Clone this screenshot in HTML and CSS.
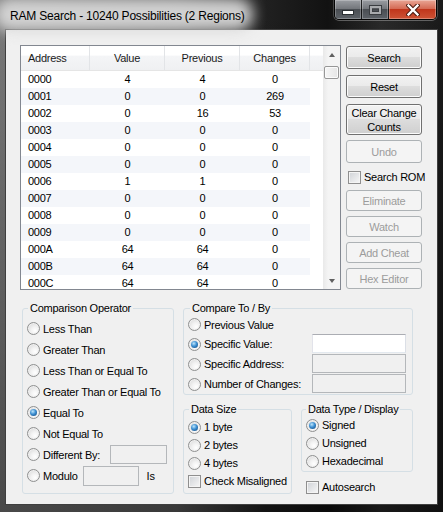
FILE: index.html
```html
<!DOCTYPE html>
<html>
<head>
<meta charset="utf-8">
<title>RAM Search</title>
<link rel="stylesheet" href="styles.css">
</head>
<body>
<div class="window">
  <div class="titlebar">
    <div class="title"><span class="glow"></span><span class="title-text">RAM Search - 10240 Possibilities (2 Regions)</span></div>
    <div class="caption">
      <div class="cap min"><svg width="12" height="5" viewBox="0 0 12 5"><rect x="0.5" y="0.5" width="11" height="4" fill="#fff" stroke="#2b2f33"/></svg></div>
      <div class="cap max"><svg width="13" height="10" viewBox="0 0 13 10"><rect x="0.5" y="0.5" width="12" height="9" fill="none" stroke="#3a3d41"/><rect x="2" y="2" width="9" height="6" fill="none" stroke="#a9abae" stroke-width="2"/><rect x="3.5" y="4" width="6" height="2.5" fill="none" stroke="#3a3d41"/></svg></div>
      <div class="cap close"><svg width="14" height="12" viewBox="0 0 14 12"><path d="M2.5 1.5 L11.5 10.5 M11.5 1.5 L2.5 10.5" stroke="#4a1a10" stroke-width="4.4" stroke-linecap="square"/><path d="M2.5 1.5 L11.5 10.5 M11.5 1.5 L2.5 10.5" stroke="#ffffff" stroke-width="2.4" stroke-linecap="square"/></svg></div>
    </div>
  </div>

  <div class="client">
    <div class="top">
      <div class="listbox">
        <div class="lv">
          <div class="lv-head">
            <div class="hc c-addr">Address</div>
            <div class="hc c-val">Value</div>
            <div class="hc c-prev">Previous</div>
            <div class="hc c-chg">Changes</div>
            <div class="hc c-fill"></div>
          </div>
          <div class="lv-body">
            <div class="row"><span class="c-addr">0000</span><span class="c-val">4</span><span class="c-prev">4</span><span class="c-chg">0</span></div>
            <div class="row"><span class="c-addr">0001</span><span class="c-val">0</span><span class="c-prev">0</span><span class="c-chg">269</span></div>
            <div class="row"><span class="c-addr">0002</span><span class="c-val">0</span><span class="c-prev">16</span><span class="c-chg">53</span></div>
            <div class="row"><span class="c-addr">0003</span><span class="c-val">0</span><span class="c-prev">0</span><span class="c-chg">0</span></div>
            <div class="row"><span class="c-addr">0004</span><span class="c-val">0</span><span class="c-prev">0</span><span class="c-chg">0</span></div>
            <div class="row"><span class="c-addr">0005</span><span class="c-val">0</span><span class="c-prev">0</span><span class="c-chg">0</span></div>
            <div class="row"><span class="c-addr">0006</span><span class="c-val">1</span><span class="c-prev">1</span><span class="c-chg">0</span></div>
            <div class="row"><span class="c-addr">0007</span><span class="c-val">0</span><span class="c-prev">0</span><span class="c-chg">0</span></div>
            <div class="row"><span class="c-addr">0008</span><span class="c-val">0</span><span class="c-prev">0</span><span class="c-chg">0</span></div>
            <div class="row"><span class="c-addr">0009</span><span class="c-val">0</span><span class="c-prev">0</span><span class="c-chg">0</span></div>
            <div class="row"><span class="c-addr">000A</span><span class="c-val">64</span><span class="c-prev">64</span><span class="c-chg">0</span></div>
            <div class="row"><span class="c-addr">000B</span><span class="c-val">64</span><span class="c-prev">64</span><span class="c-chg">0</span></div>
            <div class="row"><span class="c-addr">000C</span><span class="c-val">64</span><span class="c-prev">64</span><span class="c-chg">0</span></div>
          </div>
        </div>
        <div class="vscroll">
          <div class="sb-btn"><span class="tri up"></span></div>
          <div class="sb-track"><div class="sb-thumb"></div></div>
          <div class="sb-btn"><span class="tri down"></span></div>
        </div>
      </div>

      <div class="btncol">
        <div class="btn b-search">Search</div>
        <div class="btn b-reset">Reset</div>
        <div class="btn b-clear">Clear Change<br>Counts</div>
        <div class="btn dis b-undo">Undo</div>
        <div class="opt romrow"><span class="check"></span>Search ROM</div>
        <div class="btn dis b-small b-elim">Eliminate</div>
        <div class="btn dis b-small">Watch</div>
        <div class="btn dis b-small">Add Cheat</div>
        <div class="btn dis b-small">Hex Editor</div>
      </div>
    </div>

    <div class="bottom">
      <fieldset class="grp g-cmp">
        <legend>Comparison Operator</legend>
        <div class="opt r21"><span class="radio"></span>Less Than</div>
        <div class="opt r21"><span class="radio"></span>Greater Than</div>
        <div class="opt r21"><span class="radio"></span>Less Than or Equal To</div>
        <div class="opt r21"><span class="radio"></span>Greater Than or Equal To</div>
        <div class="opt r21"><span class="radio on"></span>Equal To</div>
        <div class="opt r21"><span class="radio"></span>Not Equal To</div>
        <div class="opt r21"><span class="radio"></span>Different By:<span class="tb dis tb-diff"></span></div>
        <div class="opt r21"><span class="radio"></span>Modulo<span class="tb dis tb-mod"></span><span class="is">Is</span></div>
      </fieldset>

      <div class="rcol">
        <fieldset class="grp g-to">
          <legend>Compare To / By</legend>
          <div class="to-grid">
            <div class="opt"><span class="radio"></span>Previous Value</div>
            <div></div>
            <div class="opt"><span class="radio on"></span>Specific Value:</div>
            <span class="tb"></span>
            <div class="opt"><span class="radio"></span>Specific Address:</div>
            <span class="tb dis"></span>
            <div class="opt"><span class="radio"></span>Number of Changes:</div>
            <span class="tb dis"></span>
          </div>
        </fieldset>

        <div class="lower">
          <fieldset class="grp g-size">
            <legend>Data Size</legend>
            <div class="opt r18"><span class="radio on"></span>1 byte</div>
            <div class="opt r18"><span class="radio"></span>2 bytes</div>
            <div class="opt r18"><span class="radio"></span>4 bytes</div>
            <div class="opt r18"><span class="check"></span>Check Misaligned</div>
          </fieldset>
          <div class="typecol">
            <fieldset class="grp g-type">
              <legend>Data Type / Display</legend>
              <div class="opt r18"><span class="radio on"></span>Signed</div>
              <div class="opt r18"><span class="radio"></span>Unsigned</div>
              <div class="opt r18"><span class="radio"></span>Hexadecimal</div>
            </fieldset>
            <div class="opt autorow"><span class="check"></span>Autosearch</div>
          </div>
        </div>
      </div>
    </div>
  </div>
</div>
</body>
</html>
```

FILE: styles.css
```css
* { box-sizing: border-box; }
html, body { margin: 0; padding: 0; }
body {
  width: 443px;
  height: 512px;
  overflow: hidden;
  font-family: "Liberation Sans", Arial, sans-serif;
  font-size: 11px;
  letter-spacing: -0.25px;
  color: #000;
  background: #1b1b1b;
}

.window {
  width: 443px;
  height: 512px;
  display: flex;
  flex-direction: column;
  background:
    linear-gradient(to bottom, rgba(0,0,0,0) 0%, rgba(0,0,0,0.4) 100%),
    linear-gradient(to right, #7a7a7a 0%, #5e5e5e 40%, #202020 60%, #121212 74%, #2a2a2a 86%, #1a1a1a 100%);
}

/* ---------- title bar ---------- */
.titlebar {
  height: 29px;
  flex: none;
  display: flex;
  justify-content: space-between;
  align-items: flex-start;
}
.title {
  position: relative;
  margin: 8px 0 0 10px;
  height: 15px;
  display: flex;
  align-items: center;
}
.glow {
  position: absolute;
  left: -16px;
  right: -8px;
  top: -10px;
  bottom: -8px;
  background: rgba(216, 216, 216, 0.95);
  border-radius: 16px;
  filter: blur(7px);
}
.title-text {
  position: relative;
  font-size: 12px;
  letter-spacing: -0.2px;
  white-space: nowrap;
  color: #000;
}
.caption {
  display: flex;
  height: 20px;
  margin-right: 6px;
  border: 1px solid rgba(0, 0, 0, 0.8);
  border-top: none;
  border-radius: 0 0 5px 5px;
  overflow: hidden;
  box-shadow: 0 1px 0 rgba(255,255,255,0.3), 1px 0 0 rgba(255,255,255,0.2), -1px 0 0 rgba(255,255,255,0.2);
}
.cap {
  height: 100%;
  display: flex;
  align-items: center;
  justify-content: center;
}
.min, .max {
  width: 27px;
  border-right: 1px solid rgba(0, 0, 0, 0.75);
  background: linear-gradient(to bottom, #9a9da2 0%, #74777c 45%, #4a4e53 50%, #5d6268 100%);
  box-shadow: inset 0 0 0 1px rgba(255,255,255,0.25);
}
.min { padding-top: 5px; }
.max { padding-top: 1px; }
.close {
  width: 47px;
  background: linear-gradient(to bottom, #e9a695 0%, #d56b55 45%, #c0361c 50%, #cd5335 100%);
  box-shadow: inset 0 0 0 1px rgba(255,255,255,0.3);
}

/* ---------- client ---------- */
.client {
  flex: 1;
  margin: 0 5px 7px 5px;
  background: #f0f0f0;
  border: 1px solid #3f3f3f;
  padding: 15px 0 0 14px;
}
.top {
  display: flex;
  align-items: flex-start;
  gap: 5px;
}

/* ---------- list view ---------- */
.listbox {
  width: 321px;
  height: 245px;
  border: 1px solid #828790;
  background: #fff;
  display: flex;
}
.lv {
  width: 302px;
  overflow: hidden;
}
.lv-head {
  display: flex;
  height: 25px;
  border-bottom: 1px solid #e5e5e5;
  background: linear-gradient(to bottom, #ffffff 0%, #ffffff 38%, #f4f5f7 42%, #eff0f2 100%);
}
.hc {
  height: 100%;
  display: flex;
  align-items: center;
  justify-content: center;
  border-right: 1px solid #e2e4e7;
  color: #1a1a1a;
}
.hc.c-addr { justify-content: flex-start; padding-left: 7px; }
.hc.c-fill { flex: 1; border-right: none; }
.c-addr { width: 69px; }
.c-val { width: 75px; }
.c-prev { width: 75px; }
.c-chg { width: 70px; }

.lv-body { height: 217px; overflow: hidden; }
.row {
  display: flex;
  width: 289px;
  height: 17px;
  line-height: 17px;
}
.row:nth-child(even) { background: #f4f6fa; }
.row span { display: block; text-align: center; }
.row .c-addr { text-align: left; padding-left: 7px; }

.vscroll {
  width: 17px;
  display: flex;
  flex-direction: column;
  background: linear-gradient(to right, #e9e9e9 0%, #f4f4f4 30%, #f4f4f4 100%);
}
.sb-btn {
  height: 17px;
  display: flex;
  align-items: center;
  justify-content: center;
}
.sb-track { flex: 1; padding-top: 3px; }
.sb-thumb {
  width: 15px;
  height: 13px;
  margin: 0 1px;
  border: 1px solid #979797;
  border-radius: 2px;
  background: linear-gradient(to right, #f6f6f6 0%, #e6e6e6 100%);
  box-shadow: inset 0 0 0 1px #fbfbfb;
}
.tri { width: 0; height: 0; border-left: 3.5px solid transparent; border-right: 3.5px solid transparent; }
.tri.up { border-bottom: 4px solid #606060; }
.tri.down { border-top: 4px solid #606060; }

/* ---------- buttons column ---------- */
.btncol {
  width: 76px;
  display: flex;
  flex-direction: column;
}
.btn {
  display: flex;
  align-items: center;
  justify-content: center;
  text-align: center;
  height: 23px;
  border: 1px solid #707070;
  border-radius: 3px;
  background: linear-gradient(to bottom, #f2f2f2 0%, #ebebeb 46%, #dddddd 50%, #cfcfcf 100%);
  box-shadow: inset 0 0 0 1px #fbfbfb;
  line-height: 14px;
}
.btn.dis {
  border-color: #adb2b5;
  background: #f4f4f4;
  box-shadow: none;
  color: #9c9c9c;
}
.b-search { margin-top: 1px; }
.b-reset { margin-top: 6px; }
.b-clear { margin-top: 6px; height: 31px; }
.b-undo { margin-top: 5px; }
.b-small { height: 21px; margin-top: 5px; }
.b-elim { margin-top: 6px; }
.romrow { height: 14px; margin-top: 7px; padding-left: 2px; }

/* ---------- options ---------- */
.opt {
  display: flex;
  align-items: center;
  white-space: nowrap;
}
.r21 { height: 21px; }
.r18 { height: 18px; }
.radio {
  flex: none;
  position: relative;
  width: 13px;
  height: 13px;
  margin-right: 3px;
  border-radius: 50%;
  border: 1px solid #8f9090;
  background: radial-gradient(circle at 65% 70%, #ffffff 0%, #f3f3f3 35%, #d3d3d3 100%);
  box-shadow: inset 0 0 0 1px #f0f0f0;
}
.radio.on::after {
  content: "";
  position: absolute;
  left: 2px;
  top: 2px;
  width: 7px;
  height: 7px;
  border-radius: 50%;
  background: radial-gradient(circle at 40% 35%, #bfe6fb 0%, #3c8fd2 45%, #0f3f72 100%);
}
.check {
  flex: none;
  width: 13px;
  height: 13px;
  margin-right: 3px;
  border: 1px solid #8f8f8f;
  background: linear-gradient(135deg, #cfd2d6 0%, #f7f7f7 100%);
  box-shadow: inset 0 0 0 1px #f4f4f4;
}
.tb {
  display: block;
  height: 19px;
  background: #fff;
  border: 1px solid;
  border-color: #abadb3 #dbdfe6 #e3e9ef #e2e3ea;
}
.tb.dis {
  background: #f0f0f0;
  border-color: #b4b7ba;
}

/* ---------- group boxes ---------- */
.bottom {
  display: flex;
  align-items: flex-start;
  margin-top: 11px;
  padding-left: 2px;
}
.grp {
  margin: 0;
  min-width: 0;
  border: 1px solid #d5dfe5;
  border-radius: 3px;
}
.grp legend {
  padding: 0 2px;
  height: 14px;
  line-height: 14px;
}
.g-cmp {
  width: 152px;
  padding: 3px 4px 7px 4px;
}
.g-cmp legend { margin-left: 1px; }
.tb-diff { width: 57px; margin-left: auto; margin-right: 2px; }
.tb-mod { width: 56px; height: 20px; margin-left: 5px; }
.is { margin-left: 8px; }

.rcol {
  width: 230px;
  margin-left: 9px;
}
.g-to {
  width: 230px;
  padding: 0 6px 0 4px;
}
.g-to legend { margin-left: 2px; }
.to-grid {
  display: grid;
  grid-template-columns: 1fr 94px;
  grid-template-rows: 19px 20px 20px 20px;
}
.to-grid .tb { align-self: start; }

.lower {
  display: flex;
  align-items: flex-start;
  margin-top: 7px;
}
.g-size {
  width: 109px;
  padding: 2px 4px 3px 4px;
}
.g-size legend { margin-left: 1px; }
.typecol {
  width: 112px;
  margin-left: 9px;
}
.g-type {
  width: 112px;
  padding: 0 4px 1px 4px;
}
.g-type legend { margin-left: 0; }
.autorow { height: 14px; margin-top: 8px; padding-left: 5px; }
```
